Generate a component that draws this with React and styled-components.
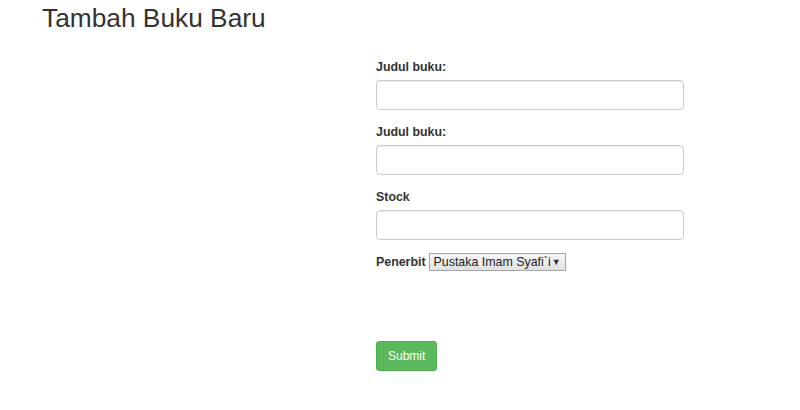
import React from 'react';
import styled, { createGlobalStyle } from 'styled-components';

const fields = [
  { label: 'Judul buku:', name: 'judul' },
  { label: 'Judul buku:', name: 'pengarang' },
  { label: 'Stock', name: 'stock' },
];

function App() {
  return (
    <Page>
      <GlobalStyle />
      <Title>Tambah Buku Baru</Title>
      <FormWrap>
        <Form onSubmit={(e) => e.preventDefault()}>
          {fields.map((field) => (
            <Group key={field.name}>
              <Label htmlFor={field.name}>{field.label}</Label>
              <Input id={field.name} type="text" />
            </Group>
          ))}
          <InlineGroup>
            <Label htmlFor="penerbit">Penerbit</Label>
            <SelectBox>
              <Select id="penerbit">
                <option>Pustaka Imam Syafi`i</option>
              </Select>
              <Caret>▼</Caret>
            </SelectBox>
          </InlineGroup>
          <Submit type="submit">Submit</Submit>
        </Form>
      </FormWrap>
    </Page>
  );
}

const GlobalStyle = createGlobalStyle`
  body {
    margin: 0;
    background: #fff;
    color: #333;
    font-family: "Liberation Sans", Arial, sans-serif;
    font-size: 14px;
    line-height: 1.42857;
  }
`;

const Page = styled.div`
  width: 800px;
  height: 410px;
  box-sizing: border-box;
  padding: 0 0 0 42px;
`;

const Title = styled.h2`
  margin: 0;
  padding-top: 2px;
  font-size: 26.3px;
  font-weight: 400;
  line-height: 32px;
  color: #333;
`;

const FormWrap = styled.div`
  display: flex;
  padding-left: 334px;
  padding-top: 23px;
`;

const Form = styled.form`
  display: flex;
  flex-direction: column;
  width: 308px;
`;

const Group = styled.div`
  display: flex;
  flex-direction: column;
  margin-bottom: 12px;
`;

const InlineGroup = styled.div`
  display: flex;
  align-items: center;
  gap: 3px;
`;

const Label = styled.label`
  font-weight: 700;
  font-size: 12.4px;
  line-height: 20px;
  margin-bottom: 3px;
  color: #333;

  ${InlineGroup} & {
    margin-bottom: 0;
  }
`;

const Input = styled.input`
  box-sizing: border-box;
  width: 308px;
  height: 30px;
  padding: 5px 10px;
  border: 1px solid #ccc;
  border-radius: 4px;
  font-family: inherit;
  font-size: 13px;
  box-shadow: inset 0 1px 1px rgba(0, 0, 0, 0.075);
  outline: none;
`;

const SelectBox = styled.span`
  position: relative;
  display: inline-flex;
`;

const Select = styled.select`
  appearance: none;
  box-sizing: border-box;
  height: 18px;
  width: 137px;
  padding: 0 14px 0 4px;
  border: 1px solid #a6a6a6;
  border-radius: 0;
  background: linear-gradient(#f6f6f6, #e1e1e1);
  font-family: "Liberation Sans", Arial, sans-serif;
  font-size: 12.4px;
  line-height: 16px;
  color: #222;
`;

const Caret = styled.span`
  position: absolute;
  right: 5px;
  top: 4px;
  font-size: 9px;
  line-height: 10px;
  color: #333;
  pointer-events: none;
`;

const Submit = styled.button`
  align-self: flex-start;
  margin-top: 69px;
  box-sizing: border-box;
  height: 30px;
  padding: 5px 11px;
  border: 1px solid #4cae4c;
  border-radius: 3px;
  background: #5cb85c;
  color: #fff;
  font-family: "Liberation Sans", Arial, sans-serif;
  font-size: 12px;
  line-height: 18px;
  cursor: pointer;
`;

export default App;
